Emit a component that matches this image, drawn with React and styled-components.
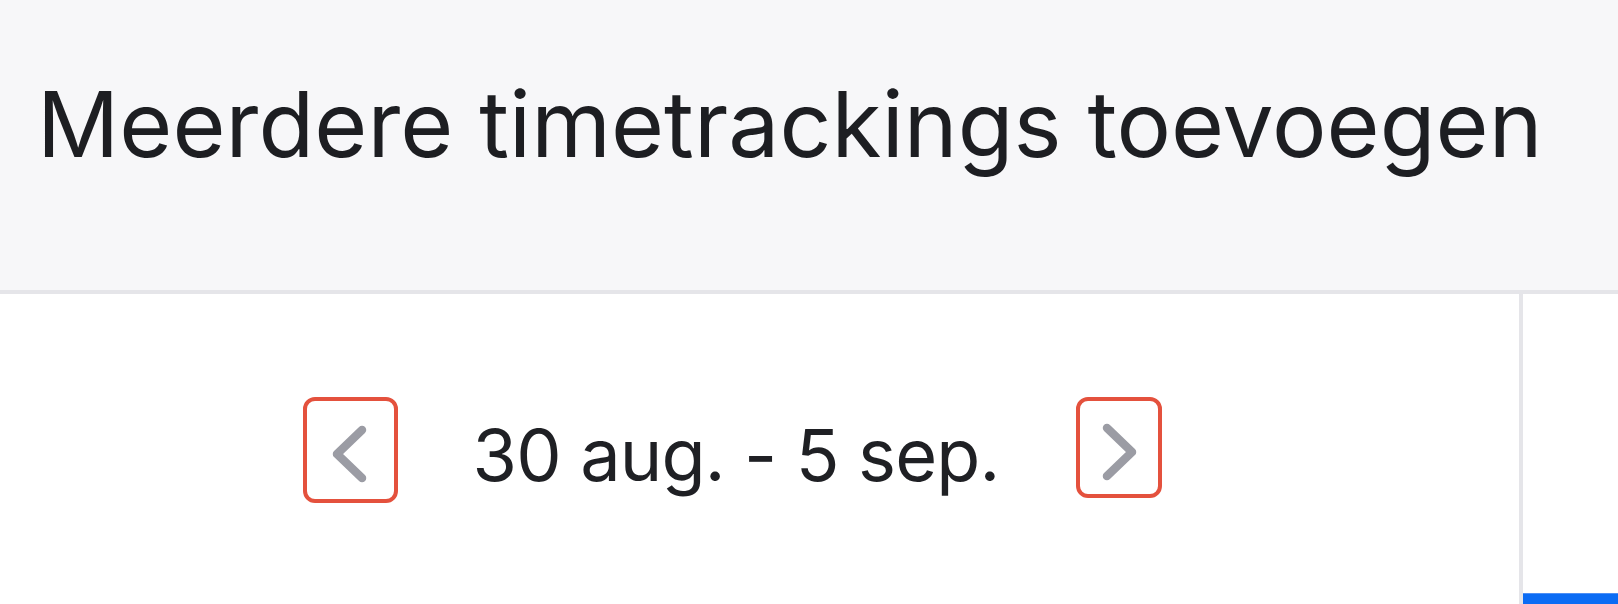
import React from 'react';
import styled, { createGlobalStyle } from 'styled-components';

//page reset and font
const GlobalStyle = createGlobalStyle`
  html, body {
    margin: 0;
    padding: 0;
    height: 100%;
    background: #ffffff;
    font-family: 'Inter', 'Noto Sans', sans-serif;
  }
  #root {
    height: 100%;
  }
`;

const Page = styled.div`
  display: flex;
  flex-direction: column;
  height: 100vh;
  overflow: hidden;
`;

const Header = styled.header`
  display: flex;
  align-items: flex-start;
  height: 221px;
  padding: 69px 0 0 37px;
  background-color: #f7f7f9;
  border-bottom: 4px solid #e5e5e9;
  flex-shrink: 0;
`;

const Title = styled.h1`
  margin: 0;
  font-size: 91px;
  font-weight: 400;
  letter-spacing: 0.1px;
  color: #1d1e22;
  white-space: nowrap;
`;

const Body = styled.div`
  display: flex;
  flex: 1;
`;

const MainPanel = styled.section`
  width: 1523px;
  flex-shrink: 0;
  border-right: 4px solid #e5e5e9;
  padding-top: 103px;
  box-sizing: border-box;
`;

const WeekNav = styled.div`
  display: flex;
  align-items: center;
  justify-content: center;
  padding-right: 54px;
`;

const NavButton = styled.button`
  display: flex;
  align-items: center;
  justify-content: center;
  width: ${(props) => props.w}px;
  height: ${(props) => props.h}px;
  padding: 0;
  background: transparent;
  border: 4px solid #e4513d;
  border-radius: 12px;
  box-sizing: border-box;
  cursor: pointer;
  align-self: flex-start;
`;

const WeekLabel = styled.span`
  margin: 8px 77px 0 75px;
  font-size: 72px;
  font-weight: 400;
  letter-spacing: -0.85px;
  color: #1f2024;
  white-space: nowrap;
`;

const SidePanel = styled.aside`
  flex: 1;
  display: flex;
  flex-direction: column;
  padding-top: 299px;
`;

const PrimaryButton = styled.div`
  height: 60px;
  background-color: #0b6cf4;
  border-top: 1px solid #4d8ff5;
`;

const Chevron = ({ dir }) => (
  <svg width="50" height="70" viewBox="0 -5 50 70" fill="none">
    <path
      d={dir === 'left' ? 'M37 10 L12 34 L37 58' : 'M13 10 L38 34 L13 58'}
      stroke="#9b9ca4"
      strokeWidth="8.5"
      strokeLinecap="round"
      strokeLinejoin="round"
    />
  </svg>
);

const App = () => {
  return (
    <>
      <GlobalStyle />
      <Page>
        <Header>
          <Title>Meerdere timetrackings toevoegen</Title>
        </Header>
        <Body>
          <MainPanel>
            <WeekNav>
              <NavButton w={95} h={106} aria-label="Vorige week">
                <Chevron dir="left" />
              </NavButton>
              <WeekLabel>30 aug. - 5 sep.</WeekLabel>
              <NavButton w={86} h={101} aria-label="Volgende week">
                <Chevron dir="right" />
              </NavButton>
            </WeekNav>
          </MainPanel>
          <SidePanel>
            <PrimaryButton />
          </SidePanel>
        </Body>
      </Page>
    </>
  );
};

export default App;
